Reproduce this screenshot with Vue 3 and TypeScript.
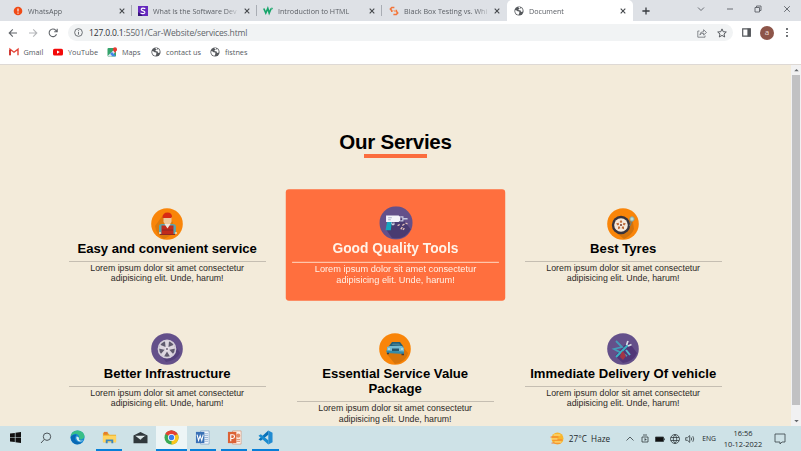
<script setup lang="ts">
interface Tab { title: string; icon: string; active?: boolean }
interface Service { title: string; icon: string; featured?: boolean }

const tabs: Tab[] = [
  { title: 'WhatsApp', icon: 'whatsapp' },
  { title: 'What Is the Software Dev', icon: 'simpli' },
  { title: 'Introduction to HTML', icon: 'w3' },
  { title: 'Black Box Testing vs. Whi', icon: 'box' },
  { title: 'Document', icon: 'globe', active: true },
]

const bookmarks = [
  { title: 'Gmail', icon: 'gmail' },
  { title: 'YouTube', icon: 'youtube' },
  { title: 'Maps', icon: 'maps' },
  { title: 'contact us', icon: 'globe' },
  { title: 'fistnes', icon: 'globe' },
]

const services: Service[] = [
  { title: 'Easy and convenient service', icon: 'worker' },
  { title: 'Good Quality Tools', icon: 'drill', featured: true },
  { title: 'Best Tyres', icon: 'tyre' },
  { title: 'Better Infrastructure', icon: 'rim' },
  { title: 'Essential Service Value Package', icon: 'car' },
  { title: 'Immediate Delivery Of vehicle', icon: 'tools' },
]

const spokes = [0, 72, 144, 216, 288]
</script>

<template>
  <div class="screen">
    <svg class="defs" width="0" height="0">
      <symbol id="globe" viewBox="0 0 10 10">
        <circle cx="5" cy="5" r="4.6" fill="#55585c" />
        <path d="M1.1 4.2Q2.8 4 3.5 5.2L5.3 5.6Q5.8 7 4.6 8.8Q1.2 8.6 1.1 4.2ZM4 1.2L6.2 1Q6.6 2.6 5 3L4.2 4L6.7 4.4L7 6L8.7 5.5Q9 3 7.2 1.8L6.2 2.8Z" fill="#fff" />
      </symbol>
      <symbol id="whatsapp" viewBox="0 0 10 10">
        <circle cx="5" cy="5" r="4.3" fill="#f04a16" />
        <path d="M5 2.4V5.6M5 6.6V7.7" stroke="#fff" stroke-width="1.1" />
      </symbol>
      <symbol id="simpli" viewBox="0 0 10 10">
        <path d="M0 0H10V10H0Z" fill="#6528bd" /><path d="M0 6L5 10H0Z" fill="#351477" />
        <path d="M7.3 2.6Q4 1.4 3.2 3.2Q3 4.4 5 4.8Q7.2 5.4 6.7 6.8Q5.4 8.5 2.5 7" fill="none" stroke="#fff" stroke-width="1.2" />
      </symbol>
      <symbol id="w3" viewBox="0 0 10 10">
        <path d="M.8 2.5L2.8 7L4.8 2.5L6.2 7L8.1 2.5" fill="none" stroke="#18a66b" stroke-width="1.7" /><path d="M8 2.2H9.6L8.8 3.6" fill="none" stroke="#18a66b" stroke-width=".8" />
      </symbol>
      <symbol id="box" viewBox="0 0 10 10">
        <path d="M5.4 1.5H2.8L1.4 3L2.8 4.6V6M4.4 8.5H7.3L8.7 7L7.3 5.2V3.8" fill="none" stroke="#f2763c" stroke-width="1.6" />
        <path d="M4.6 4.2L6.4 5.8" stroke="#f8a36f" stroke-width="1.2" />
      </symbol>
      <symbol id="gmail" viewBox="0 0 10 10">
        <path d="M1 8.2V2.2L5 5.2L9 2.2V8.2" fill="none" stroke="#e34235" stroke-width="1.4" /><path d="M1 3V8.2" stroke="#c5221f" stroke-width="1.4" />
      </symbol>
      <symbol id="youtube" viewBox="0 0 10 10">
        <rect y="1.7" width="10" height="6.8" rx="1.6" fill="#f30909" /><path d="M4 3.5L6.8 5.1L4 6.7Z" fill="#fff" />
      </symbol>
      <symbol id="maps" viewBox="0 0 10 10">
        <rect x=".5" y="1" width="8.5" height="8.5" rx="1" fill="#34a36b" /><path d="M.5 9L7 2.8L9 4.5L4 9.5Z" fill="#dce6ed" /><path d="M5 5L9 9.2H5.5L3 6.8Z" fill="#4286e8" />
        <circle cx="8" cy="2.2" r="2" fill="#e8382f" /><path d="M6.2 3L8 6L9.8 3Z" fill="#e8382f" />
      </symbol>
    </svg>

    <header class="tabs">
      <div v-for="tab in tabs" :key="tab.title" class="tab" :class="[tab.icon, { active: tab.active }]">
        <svg class="fav"><use :href="`#${tab.icon}`" /></svg>
        <span class="tab-title">{{ tab.title }}</span>
        <svg class="close" viewBox="0 0 6 6"><path d="M.7.7L5.3 5.3M5.3.7L.7 5.3" /></svg>
      </div>
      <svg class="plus" viewBox="0 0 8 8"><path d="M4 .4V7.6M.4 4H7.6" /></svg>
      <div class="window-controls">
        <svg viewBox="0 0 8 8"><path d="M1 2.5L4 5.5L7 2.5" /></svg>
        <svg viewBox="0 0 8 8"><path d="M1 4H7" /></svg>
        <svg viewBox="0 0 8 8"><path d="M1 2.5H5.5V7H1ZM2.5 2.3V1H7V5.5H5.7" /></svg>
        <svg viewBox="0 0 8 8"><path d="M1.2 1.2L6.8 6.8M6.8 1.2L1.2 6.8" /></svg>
      </div>
    </header>

    <div class="toolbar">
      <svg class="nav" viewBox="0 0 10 10"><path d="M9 5H1.4M4.8 1.4L1.2 5L4.8 8.6" /></svg>
      <svg class="nav faded" viewBox="0 0 10 10"><path d="M1 5H8.6M5.2 1.4L8.8 5L5.2 8.6" /></svg>
      <svg class="nav" viewBox="0 0 10 10"><path d="M8.5 6.2A3.8 3.8 0 1 1 7.8 2.3L9 3.4M9.2.8V3.7H6.2" /></svg>
      <div class="address">
        <svg class="info" viewBox="0 0 10 10"><circle cx="5" cy="5" r="4.3" /><path d="M5 4.4V7.4M5 2.5V3.5" /></svg>
        <span class="url"><b>127.0.0.1</b>:5501/Car-Website/services.html</span>
        <svg class="share" viewBox="0 0 10 10"><path d="M2.5 3H.8V9.2H8V7.5M2.8 7Q3 3.6 6.6 3.6V1.7L9.5 4.5L6.6 7V5.2Q4 5.2 2.8 7Z" /></svg>
        <svg class="star" viewBox="0 0 10 10"><path d="M5 .9L6.2 3.7L9.3 4L7 6L7.7 9L5 7.4L2.3 9L3 6L.7 4L3.8 3.7Z" /></svg>
      </div>
      <svg class="panel" viewBox="0 0 9 9"><path d="M.7.8H8.3V8.2H.7Z" fill="none" /><path d="M6 1H8V8H6Z" fill="#55585c" /></svg>
      <span class="avatar">a</span>
      <span class="dots"><i></i><i></i><i></i></span>
    </div>

    <nav class="bookmarks">
      <span v-for="mark in bookmarks" :key="mark.title" class="bookmark" :class="mark.title.split(' ')[0]">
        <svg class="mark-icon"><use :href="`#${mark.icon}`" /></svg><span>{{ mark.title }}</span>
      </span>
    </nav>

    <div class="viewport">
      <main>
        <h1>Our Servies</h1>
        <div class="underline"></div>
        <div class="grid">
          <article v-for="service in services" :key="service.title" class="card" :class="{ featured: service.featured }">
            <svg class="icon" viewBox="0 0 32 32">
              <circle cx="16" cy="16" r="15.8" :fill="['drill', 'rim', 'tools'].includes(service.icon) ? '#64508a' : '#f98509'" />
              <g v-if="service.icon === 'worker'">
                <path d="M12 7L4 18Q5 27 13 31L22 26V14Z" fill="#dc790b" />
                <path d="M8 26V18Q8 16 11 16H22Q25 16 25 19V26Z" fill="#5ba5ad" />
                <path d="M12.5 9H20.5V14L18.5 17H14.5L12.5 14Z" fill="#edc799" />
                <path d="M11.5 10Q11.5 4.5 16.5 4.5Q21 4.5 21 9L20 10Z" fill="#d82a14" />
                <path d="M10.5 17.5H22.5V27H10.5Z" fill="#c12b1c" /><path d="M13.5 16L16.5 20.5L19.5 16Z" fill="#f1e4d7" />
                <path d="M11 22H22M9 26.5H24" stroke="#8e2924" /><path d="M8 25H10M24 25H26" stroke="#edc799" stroke-width="2" />
              </g>
              <g v-else-if="service.icon === 'drill'">
                <path d="M7 23L12 30Q24 33 30 22L22 12L11 15Z" fill="#493b71" />
                <path d="M6.5 9H18.5L20 10V14L18.5 15H6.5Z" fill="#f4f3fb" /><path d="M8.5 11H12M8.5 13H11" stroke="#abb0c8" />
                <path d="M20 10.2H22.5V14H20M22.5 12H27" stroke="#c7c9e0" stroke-width="1.2" fill="none" />
                <path d="M7.5 15H12L11 23H6Z" fill="#16a5bd" /><path d="M12 15.5Q12 18.5 14 17.5V15.5" stroke="#dce1ec" fill="none" />
                <path d="M17.5 18.5L19.5 17.5M22 18.5L24 17M20.5 22L22 20M25 16L27 17M24 21L22.5 22.5" stroke="#e5c3bb" stroke-width="1.2" />
              </g>
              <g v-else-if="service.icon === 'tyre'">
                <path d="M7 23L17 31Q25 27 27 21L25 9Z" fill="#d3730c" />
                <circle cx="14" cy="17" r="9.2" fill="#38343d" /><circle cx="14" cy="17" r="6.8" fill="#f5e9db" />
                <path v-for="spoke in spokes" :key="spoke" d="M14 11.8L15.4 14L14 15L12.6 14Z" fill="#be6936" :transform="`rotate(${spoke} 14 17)`" />
                <circle cx="14" cy="17" r="1.1" fill="#7c4538" />
                <path d="M24 12Q25 15 22.5 18" fill="none" stroke="#777c70" stroke-width="1.3" /><circle cx="25" cy="11" r="2.2" fill="#beddd7" stroke="#83a49e" />
              </g>
              <g v-else-if="service.icon === 'rim'">
                <path d="M7 18L15 29Q26 27 29 20L23 10Z" fill="#54417b" />
                <circle cx="16" cy="16" r="8.6" fill="#5f5a6d" stroke="#d4ced9" stroke-width="1.6" />
                <path v-for="spoke in spokes" :key="spoke" d="M14.7 16L14 8H18L17.3 16Z" fill="#dcd6df" :transform="`rotate(${spoke} 16 16)`" />
                <circle cx="16" cy="16" r="2.2" fill="#e6dfe7" /><circle cx="16" cy="16" r=".9" fill="#655c70" />
              </g>
              <g v-else-if="service.icon === 'car'">
                <path d="M7 20L16 31Q27 29 29 20L22 12Z" fill="#d7750b" />
                <path d="M10 13L13 9H21L24 13L25 17H8Z" fill="#235f79" /><path d="M12.5 12L14 10.5H20L22 13Z" fill="#437f91" />
                <path d="M8 14L11 13H23L25 15V20L8 19Z" fill="#75bad0" /><path d="M7 17.5L25 18.5V21L8 20Z" fill="#348baa" />
                <path d="M13 15.5H20V18H13Z" fill="#25566e" /><path d="M8 20.5H10M22.5 21.5H25" stroke="#403b38" stroke-width="1.6" /><path d="M9 16H11M22 16H24" stroke="#dcf5ed" />
              </g>
              <g v-else>
                <path d="M8 23L16 30Q27 28 30 20L21 8Z" fill="#513778" />
                <path d="M9 8L15 14L7 16L20 23" fill="none" stroke="#449db9" stroke-width="1.8" />
                <path d="M9 24L21 12" stroke="#3bb2c4" stroke-width="2" /><path d="M19.5 12L21 8M21 13L24.5 11.5" fill="none" stroke="#d9dce5" stroke-width="1.8" />
                <path d="M14 20L16 18L19 23L16 27L13 24Z" fill="#a33545" /><path d="M19 17L23 22" stroke="#58b7cc" stroke-width="2" />
              </g>
            </svg>
            <h2>{{ service.title }}</h2>
            <hr>
            <p>Lorem ipsum dolor sit amet consectetur adipisicing elit. Unde, harum!</p>
          </article>
        </div>
      </main>
      <aside class="scrollbar">
        <svg viewBox="0 0 8 8"><path d="M2 5L4 3L6 5Z" /></svg>
        <div class="thumb"></div>
        <svg viewBox="0 0 8 8"><path d="M2 3L4 5L6 3Z" /></svg>
      </aside>
    </div>

    <footer class="taskbar">
      <div class="apps">
        <div class="app"><svg class="win" viewBox="0 0 10 10"><path d="M0 1.4L4.4.8V4.7H0ZM5 .7L10 0V4.7H5ZM0 5.3H4.4V9.2L0 8.6ZM5 5.3H10V10L5 9.3Z" fill="#111" /></svg></div>
        <div class="app"><svg class="search" viewBox="0 0 12 12"><circle cx="7" cy="4.7" r="3.7" fill="none" stroke="#4d555a" /><path d="M4.3 7.4L1 11" stroke="#4d555a" /></svg></div>
        <div class="app"><svg viewBox="0 0 16 16"><circle cx="8" cy="8" r="7.5" fill="#1789d4" /><path d="M1 7Q1 1 8 .5Q15 1 15.5 7Q15 10 11 10Q9 10 10 8Q9 4 6 4Q3 4 1 7Z" fill="#38bf88" /><path d="M1 7Q4 4 7 5Q4 8 6 11Q8 14 13 13Q9 17 4 14Q0 11 1 7Z" fill="#0869b4" /><path d="M7 7Q6 10 9 12Q12 13 14 11Q11 12 9.5 10Q10 7 7 7Z" fill="#d7edf0" /></svg></div>
        <div class="app open"><svg viewBox="0 0 16 16"><path d="M1 3H6L8 5H15V13H1Z" fill="#e9ad27" /><path d="M2 2H6V5H2Z" fill="#e47c2e" /><path d="M1 6H15V13H1Z" fill="#ffd45f" /><path d="M4 10H12V14H10V12H6V14H4Z" fill="#3985bd" /></svg></div>
        <div class="app"><svg class="mail" viewBox="0 0 16 16"><path d="M0 5L8 1L16 5V14H0Z" fill="#30383c" /><path d="M2 5.5H14L8 10Z" fill="#dce8e9" /><path d="M9 9.3L13 6.3" fill="none" stroke="#30383c" /></svg></div>
        <div class="app open current"><svg viewBox="0 0 16 16"><circle cx="8" cy="8" r="7.5" fill="#3aaa55" /><path d="M8 8L1.5 4.2A7.5 7.5 0 0 1 14.5 4.2Z" fill="#e54234" /><path d="M8 8L14.5 4.2A7.5 7.5 0 0 1 8 15.5Z" fill="#fbc51c" /><path d="M1.5 4.2L8 4.5H14.6Q13.5 2 8 .5Q3 1 1.5 4.2Z" fill="#e54234" /><circle cx="8" cy="8" r="3.8" fill="#fff" /><circle cx="8" cy="8" r="2.9" fill="#3b7ded" /></svg></div>
        <div class="app open office"><svg viewBox="0 0 16 16"><path d="M6 1H15V15H6Z" fill="#f3f8fd" stroke="#6b91c0" stroke-width=".6" /><path d="M10 4H14M10 6H14M10 8H14M10 10H14M10 12H14" stroke="#789cc8" stroke-width=".8" /><path d="M1 2H10V14H1Z" fill="#3970b6" /><path d="M2.2 5L3.8 11L5.5 6L7.2 11L8.8 5" stroke="#fff" stroke-width="1.2" fill="none" /></svg></div>
        <div class="app open office"><svg viewBox="0 0 16 16"><path d="M6 1H15V15H6Z" fill="#fff5ee" stroke="#d1835f" stroke-width=".6" /><circle cx="12" cy="6" r="2.2" fill="#e28b66" /><path d="M10 10H14M10 12H14" stroke="#d9835e" /><path d="M1 2H10V14H1Z" fill="#dc6235" /><path d="M4 12V5H6Q8 5 8 7T6 9H4" stroke="#fff" stroke-width="1.2" fill="none" /></svg></div>
        <div class="app open"><svg viewBox="0 0 16 16"><path d="M11 .5L15.5 3V13L11 15.5Z" fill="#218bd1" /><path d="M11 .5V5L3 11.5L.5 10Z" fill="#0871b9" /><path d="M.5 6L3 4.5L11 11V15.5Z" fill="#198bcf" /></svg></div>
      </div>
      <div class="weather"><svg viewBox="0 0 14 14"><circle cx="7.5" cy="6.5" r="6" fill="#f8b72f" /><path d="M1 5H8M3 8H12M2 11H10" stroke="#f17d2c" stroke-width="1.2" stroke-linecap="round" /><path d="M4 3H10M1 7H7M5 10H11" stroke="#ffe18d" stroke-linecap="round" /></svg><span>27°C&nbsp; Haze</span></div>
      <div class="tray">
        <svg viewBox="0 0 10 10"><path d="M1.5 6.5L5 3L8.5 6.5" /></svg>
        <svg viewBox="0 0 10 10"><path d="M2 3H8V8H2ZM3 1H7M5 4.2V6.8M5 5.5H6.5" /></svg>
        <svg viewBox="0 0 10 10"><path d="M.5 3H8.5V7.5H.5Z" fill="#111" /><path d="M9.5 4.4V6.2" /></svg>
        <svg class="net" viewBox="0 0 10 10"><circle cx="5" cy="5" r="4.5" /><path d="M.8 3.5H9M.8 6.5H9M5 .5Q1.5 5 5 9.5Q8.5 5 5 .5" /></svg>
        <svg viewBox="0 0 10 10"><path d="M.7 3.7H2.5L4.7 1.6V8.4L2.5 6.3H.7ZM6.2 3.5Q7.2 5 6.2 6.5M7.8 2.2Q9.7 5 7.8 7.8" /></svg>
      </div>
      <span class="language">ENG</span>
      <div class="clock"><span>16:56</span><span>10-12-2022</span></div>
      <svg class="notice" viewBox="0 0 12 12"><path d="M1 1H11V9H8L6 11V9H1Z" /></svg>
    </footer>
  </div>
</template>

<style>
body { margin: 0; overflow: hidden; }
</style>

<style scoped>
* { box-sizing: border-box; }
.screen { width: 801px; height: 451px; overflow: hidden; display: flex; flex-direction: column; background: #fff; font-family: "Open Sans", "Noto Sans", sans-serif; }
.defs { display: none; }
svg { display: block; flex-shrink: 0; fill: none; }
.tabs { height: 21px; flex: none; display: flex; background: #dee1e6; }
.tab { width: 126px; display: flex; align-items: center; padding: 1px 0 0 13px; color: #5c6066; font-size: 7.15px; border-right: 1px solid #a9adb4; border-image: linear-gradient(transparent 25%, #a9adb4 25%, #a9adb4 75%, transparent 75%) 1; }
.tab.whatsapp { width: 132px; }
.tab.simpli { padding-left: 6px; width: 125px; }
.tab.w3 { padding-left: 6px; width: 125px; }
.tab.box { padding-left: 7px; width: 125px; border-color: transparent; border-image: none; }
.tab.active { background: #fff; border: 0; border-radius: 5px 5px 0 0; padding-left: 7px; }
.fav { width: 10px; height: 10px; margin-right: 5px; }
.tab-title { flex: 1; white-space: nowrap; mask-image: linear-gradient(90deg, #000 72px, transparent 87px); }
.close { width: 6px; height: 6px; margin: 0 6px 0 4px; stroke: #44474b; stroke-width: 1.1; }
.tab.whatsapp .close { margin-right: 6.5px; }
.active .close { margin-right: 7.5px; }
.plus { width: 8px; height: 8px; margin: 7px 0 0 9px; stroke: #383b40; stroke-width: 1.3; }
.window-controls { margin-left: auto; display: flex; gap: 20.5px; padding: 5px 10.5px 0 0; }
.window-controls svg { width: 8px; height: 8px; stroke: #5b6066; stroke-width: .9; }
.toolbar { height: 23px; flex: none; display: flex; align-items: center; padding-left: 8px; }
.nav { width: 10px; height: 10px; margin-right: 10px; stroke: #606469; stroke-width: 1.1; }
.faded { stroke: #b4b6b9; }
.address { width: 665px; height: 17px; border-radius: 9px; background: #f1f3f4; display: flex; align-items: center; padding: 0 6px; }
.info { width: 9px; height: 9px; margin-right: 6px; stroke: #5f6368; stroke-width: 1; }
.url { flex: 1; font-size: 8.55px; letter-spacing: -.165px; color: #606469; }
.url b { font-weight: 400; color: #303236; }
.share { width: 10px; height: 10px; stroke: #6c7075; stroke-width: .8; margin-right: 10px; }
.star { width: 10px; height: 10px; stroke: #595c61; }
.panel { width: 9px; height: 9px; margin-left: 9px; stroke: #55585c; stroke-width: 1.2; }
.avatar { width: 14px; height: 14px; border-radius: 50%; background: #8d5549; color: #eadbd7; font-size: 8px; line-height: 12px; text-align: center; margin-left: 9px; flex: none; }
.dots { display: flex; flex-direction: column; gap: 1.8px; margin-left: 12px; }
.dots i { width: 1.6px; height: 1.6px; background: #55585c; border-radius: 50%; }
.bookmarks { height: 21px; flex: none; display: flex; align-items: center; padding: 0 0 4px 8.5px; color: #55595e; font-size: 7.3px; border-bottom: 1px solid #ded9d5; }
.bookmark { display: flex; align-items: center; gap: 5px; width: 43.5px; white-space: nowrap; }
.bookmark.YouTube { width: 55px; }
.bookmark.Maps { width: 43px; }
.bookmark.contact { width: 60px; }
.mark-icon { width: 10px; height: 10px; }
.YouTube, .contact { padding-left: 1px; }
.viewport { height: 361px; flex: none; display: flex; overflow: hidden; background: #f3ebda; }
main { width: 791px; padding-top: 65px; font-family: "Liberation Sans", Arial, sans-serif; color: #000; }
h1 { margin: 0; font-size: 20.5px; line-height: 24px; text-align: center; font-weight: 700; letter-spacing: -.25px; }
.underline { width: 63px; height: 3.5px; background: #fb6d3e; margin: 0 auto; }
.grid { width: 665px; margin: 34.5px auto 0 62.7px; display: grid; grid-template-columns: repeat(3, 209px); justify-content: space-between; row-gap: 19px; }
.card { min-height: 106px; padding: 15.5px 6px 0; display: flex; flex-direction: column; align-items: center; text-align: center; }
.icon { width: 32px; height: 32px; }
h2 { margin: 1px 0 0; font-size: 13.13px; line-height: 15.6px; font-weight: 700; }
hr { width: 197px; height: 1px; border: 0; background: #c5beb2; margin: 4.5px 0 1px; }
p { width: 175px; margin: 0; font-size: 8.79px; line-height: 10.4px; color: #2d2a27; }
.featured { background: #ff6f3e; border-radius: 3px; transform: scale(1.05); color: #fff3e8; }
.featured p { color: #fff0e5; }
.featured hr { background: #ffd4bd; }
.scrollbar { width: 10px; background: #f1f1f2; display: flex; flex-direction: column; align-items: center; }
.scrollbar svg { width: 9px; height: 10px; fill: #64676c; }
.thumb { width: 8px; height: 330px; background: #c1c1c3; margin-bottom: auto; }
.taskbar { height: 25px; flex: none; display: flex; align-items: center; background: #cee2e7; color: #22282b; padding-right: 15px; }
.apps { display: flex; height: 25px; gap: 1px; }
.app { width: 30.3px; display: flex; justify-content: center; align-items: center; border-bottom: 2px solid transparent; }
.app svg { width: 15px; height: 15px; }
.app .mail { height: 14px; }
.app .win { width: 11px; height: 11px; }
.app .search { width: 12px; height: 12px; }
.app.open { border-color: #087fd8; background-clip: padding-box; }
.app.current { background: #edf5f6; }
.app.open:not(.current) { width: 26.3px; margin: 0 2px; }
.weather { display: flex; align-items: center; margin-left: auto; gap: 5px; font-size: 8.2px; white-space: nowrap; }
.weather svg { width: 14px; height: 14px; }
.tray { display: flex; gap: 5px; margin-left: 15px; }
.tray svg { width: 10px; height: 10px; stroke: #333c40; stroke-width: .8; }
.language { font-size: 6.8px; margin-left: 7px; }
.clock { width: 40px; display: flex; flex-direction: column; align-items: center; margin-left: 7px; font-size: 7.4px; line-height: 11px; white-space: nowrap; }
.notice { width: 12px; height: 12px; stroke: #394347; stroke-width: .8; margin-left: 11px; }
</style>
